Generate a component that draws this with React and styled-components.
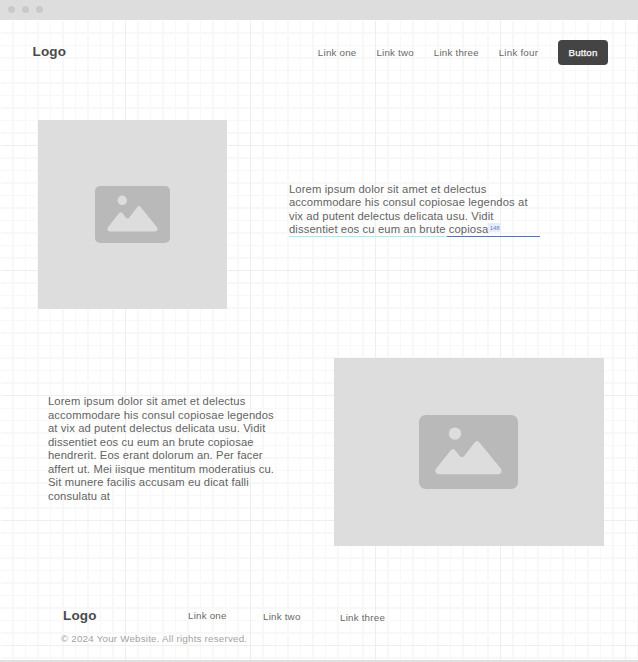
import React from 'react';
import styled, { createGlobalStyle } from 'styled-components';

const GlobalStyle = createGlobalStyle`
  * { box-sizing: border-box; }
  body { margin: 0; background: #fff; font-family: "Liberation Sans", Arial, sans-serif; }
  p { margin: 0; }
`;

const Window = styled.div`
  width: 638px;
  height: 662px;
  display: flex;
  flex-direction: column;
  overflow: hidden;
`;

const TitleBar = styled.div`
  flex: none;
  height: 20px;
  padding: 0 0 1px 8px;
  display: flex;
  align-items: center;
  gap: 6.5px;
  background: #ddd;
`;

const Dot = styled.span`
  width: 7.3px;
  height: 7.3px;
  border-radius: 50%;
  background: #c9c9c9;
`;

const Canvas = styled.div`
  flex: none;
  height: 640px;
  display: flex;
  flex-direction: column;
  background:
    linear-gradient(#fff, #fff) 0 0 / 1px 100% no-repeat,
    linear-gradient(#fff, #fff) 0 0 / 100% 1px no-repeat,
    repeating-linear-gradient(90deg, #eeeeee 0 1px, transparent 1px 125px),
    repeating-linear-gradient(180deg, #eeeeee 0 1px, transparent 1px 125px),
    repeating-linear-gradient(90deg, #f8f8f8 0 1px, transparent 1.5px 12.5px),
    repeating-linear-gradient(180deg, #f8f8f8 0 1px, transparent 1.5px 12.5px),
    #fff;
`;

const BottomEdge = styled.div`
  flex: none;
  height: 2px;
  background: #e0e0e0;
`;

const Header = styled.header`
  height: 65px;
  padding: 0 30px 0 32.5px;
  display: flex;
  align-items: center;
`;

const Logo = styled.div`
  font-size: 13.5px;
  line-height: 16px;
  letter-spacing: 0.15px;
  font-weight: 700;
  color: #4a4a4a;
  width: ${(p) => p.$width}px;
  margin-top: ${(p) => p.$shift || 0}px;
`;

const Nav = styled.nav`
  margin-left: auto;
  display: flex;
  align-items: center;
  gap: 19.9px;
`;

const Link = styled.a`
  font-size: 9.75px;
  line-height: 12px;
  letter-spacing: 0.22px;
  color: #686868;
  white-space: nowrap;
  margin-top: ${(p) => p.$drop || 0}px;
  width: ${(p) => (p.$width ? `${p.$width}px` : 'auto')};
`;

const Button = styled.button`
  width: 50px;
  height: 25px;
  padding: 0;
  border: 0;
  border-radius: 4px;
  background: #444;
  color: #fff;
  font: 9.75px/25px "Liberation Sans", Arial, sans-serif;
  letter-spacing: 0.12px;
  -webkit-text-stroke: 0.25px #fff;
`;

const Feature = styled.section`
  display: flex;
  align-items: flex-start;
  margin-top: ${(p) => p.$top}px;
  padding-left: ${(p) => p.$left}px;
`;

const Placeholder = styled.div`
  flex: none;
  width: ${(p) => p.$width}px;
  height: ${(p) => p.$height}px;
  padding-right: ${(p) => p.$inset || 0}px;
  display: flex;
  align-items: center;
  justify-content: center;
  background: #ddd;
  svg { display: block; }
`;

const Copy = styled.div`
  flex: none;
  width: ${(p) => p.$width}px;
  margin: ${(p) => p.$margin};
  font-size: 11.25px;
  line-height: 13.5px;
  letter-spacing: 0.11px;
  color: #636363;
  white-space: nowrap;
`;

const Underline = styled.div`
  height: 1px;
  width: 251px;
  margin-top: -0.5px;
  background: linear-gradient(90deg, #9ff0f0 0 158px, #4a73d8 158px);
`;

const Count = styled.span`
  display: inline-flex;
  align-items: center;
  width: 13px;
  height: 9px;
  padding-left: 2px;
  margin: -4px 0 0 -0.5px;
  vertical-align: top;
  transform: translateY(4px);
  font-size: 6px;
  line-height: 8px;
  letter-spacing: -0.1px;
  color: #5c83e6;
  background: #e9edf5;
`;

const Footer = styled.footer`
  margin-top: 61px;
  padding-left: 61px;
`;

const FooterRow = styled.div`
  display: flex;
  align-items: flex-start;
  padding-left: 2px;
  height: 26px;
`;

const Copyright = styled.p`
  font-size: 9.75px;
  line-height: 12px;
  letter-spacing: 0.22px;
  color: #a3a3a3;
`;

function PictureIcon({ width, height }) {
  return (
    <svg width={width} height={height} viewBox="0 0 99 74" preserveAspectRatio="none">
      <rect width="99" height="74" rx="6.5" fill="#b9b9b9" />
      <circle cx="36" cy="18.6" r="6.2" fill="#ddd" />
      <path
        d="M17.2 53.5 L31.6 35.5 Q34 32.5 36.4 35.5 L40.6 40.8 Q43 43.5 45.4 40.8 L55.6 27.5 Q58 24.5 60.4 27.5 L81.4 53 Q83 55 82.5 56.5 Q82 59.2 79 59.2 H20 Q17 59.2 16.3 56.5 Q16 55 17.2 53.5Z"
        fill="#ddd"
      />
    </svg>
  );
}

const Line = styled.p`
  height: 13.5px;
`;

const INTRO = [
  'Lorem ipsum dolor sit amet et delectus',
  'accommodare his consul copiosae legendos at',
  'vix ad putent delectus delicata usu. Vidit',
];
const STORY = [
  'Lorem ipsum dolor sit amet et delectus',
  'accommodare his consul copiosae legendos',
  'at vix ad putent delectus delicata usu. Vidit',
  'dissentiet eos cu eum an brute copiosae',
  'hendrerit. Eos erant dolorum an. Per facer',
  'affert ut. Mei iisque mentitum moderatius cu.',
  'Sit munere facilis accusam eu dicat falli',
  'consulatu at',
];

export default function App() {
  return (
    <Window>
      <GlobalStyle />
      <TitleBar><Dot /><Dot /><Dot /></TitleBar>
      <Canvas>
        <Header>
          <Logo $shift={-2}>Logo</Logo>
          <Nav>
            <Link>Link one</Link>
            <Link>Link two</Link>
            <Link>Link three</Link>
            <Link>Link four</Link>
            <Button>Button</Button>
          </Nav>
        </Header>
        <Feature $top={35} $left={38}>
          <Placeholder $width={189} $height={189}><PictureIcon width={75} height={57} /></Placeholder>
          <Copy $width={251} $margin="62.5px 0 0 62px">
            {INTRO.map((t) => <Line key={t}>{t}</Line>)}
            <Line>dissentiet eos cu eum an brute copiosa<Count>148</Count></Line>
            <Underline />
          </Copy>
        </Feature>
        <Feature $top={49} $left={48}>
          <Copy $width={286} $margin="37px 0 0 0">
            {STORY.map((t) => <Line key={t}>{t}</Line>)}
          </Copy>
          <Placeholder $width={270} $height={188} $inset={1}><PictureIcon width={99} height={74} /></Placeholder>
        </Feature>
        <Footer>
          <FooterRow>
            <Logo $width={125} $shift={1}>Logo</Logo>
            <Link $drop={3} $width={75}>Link one</Link>
            <Link $drop={4} $width={77}>Link two</Link>
            <Link $drop={5}>Link three</Link>
          </FooterRow>
          <Copyright>© 2024 Your Website. All rights reserved.</Copyright>
        </Footer>
      </Canvas>
      <BottomEdge />
    </Window>
  );
}
